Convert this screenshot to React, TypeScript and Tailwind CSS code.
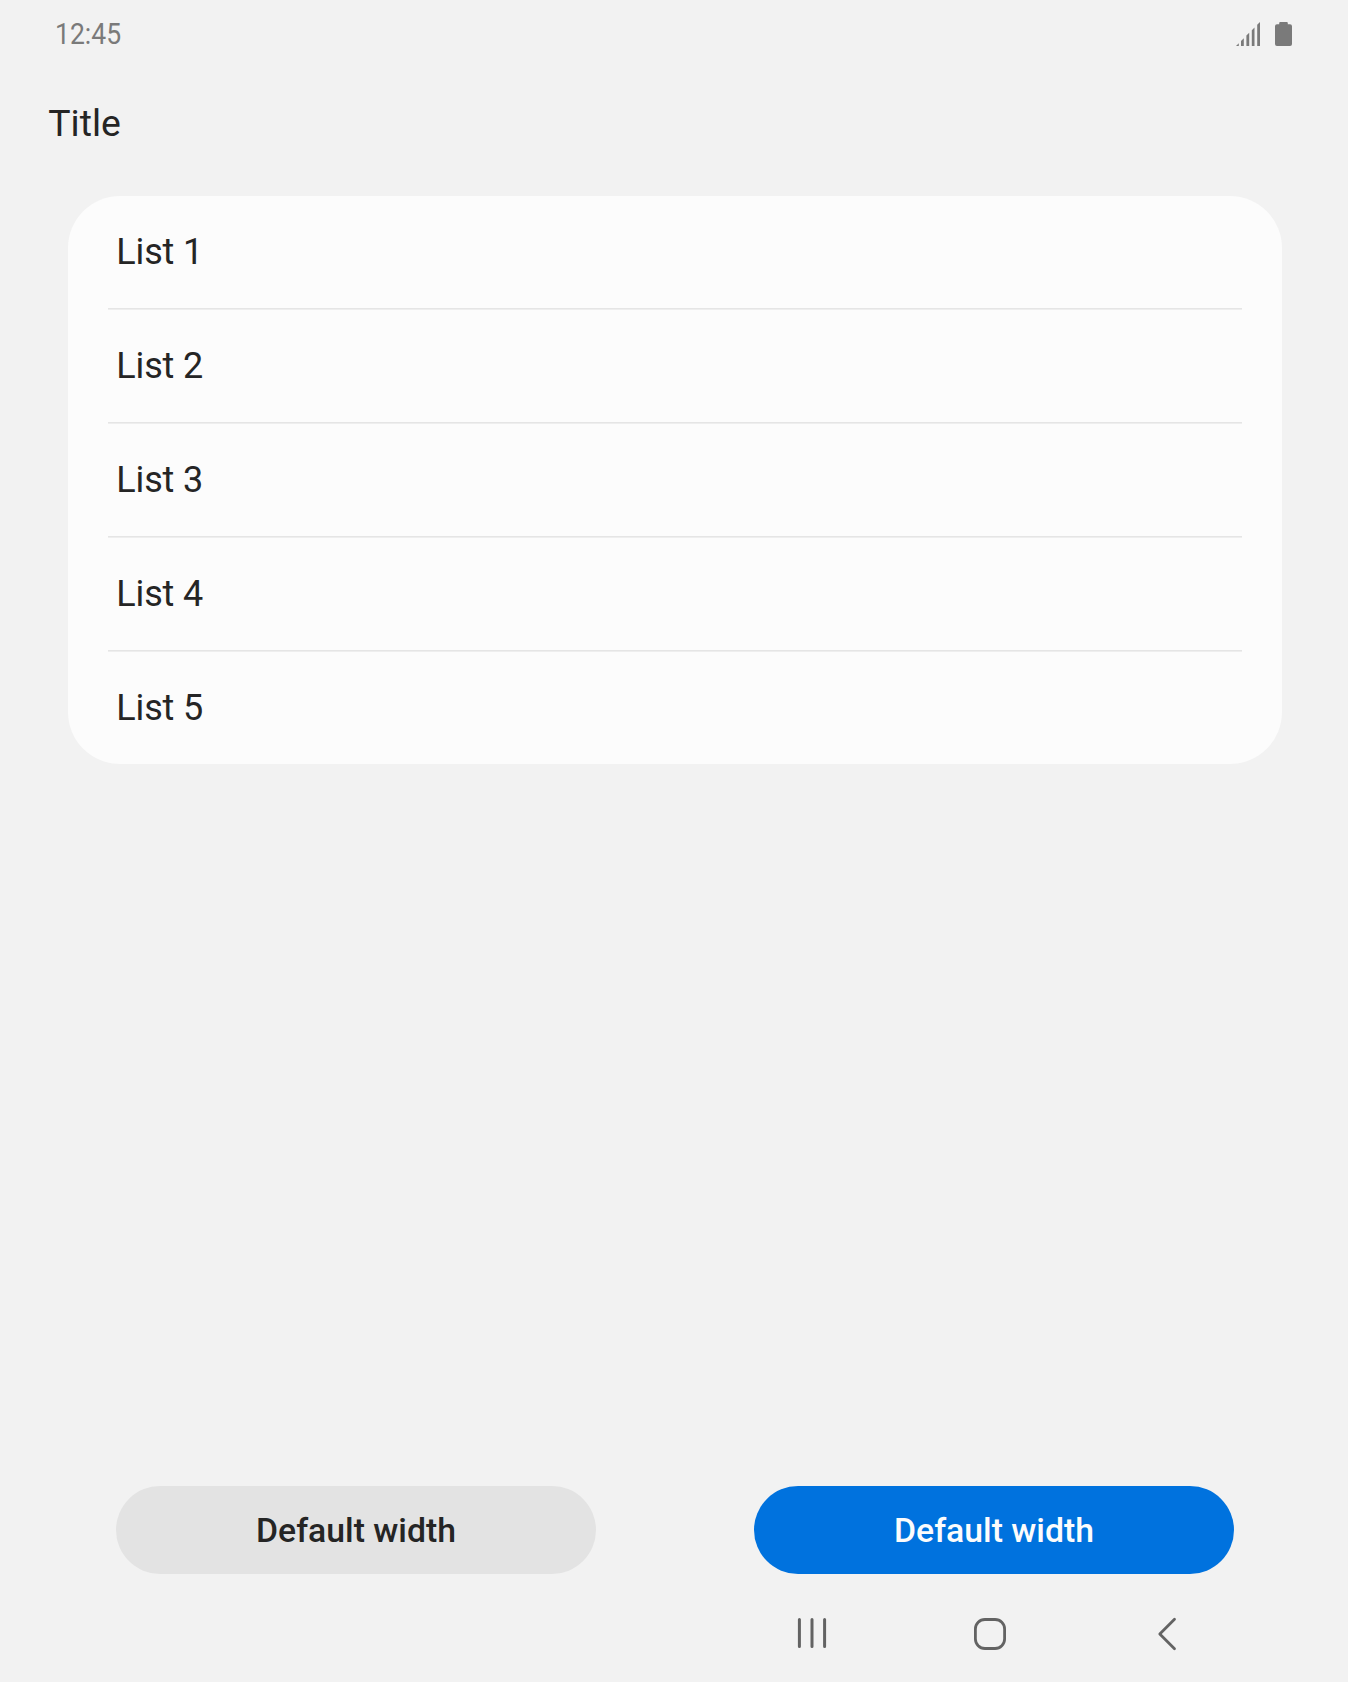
const items = ["List 1", "List 2", "List 3", "List 4", "List 5"];

function SignalIcon() {
  return (
    <svg width="26" height="24" viewBox="0 0 26 24" fill="#7a7a7a">
      <path d="M1 24 3.8 21.2V24ZM6 24V19L8.8 16.2V24ZM11.4 24V13.6L14.2 10.8V24ZM16.8 24V8.2L19.5 5.5V24ZM22.2 24V2.8L25 0V24Z" />
    </svg>
  );
}

function BatteryIcon() {
  return (
    <svg width="17" height="24" viewBox="0 0 17 24" fill="#7a7a7a">
      <path d="M5.2 0h6.6q1 0 1 1v1.2H15q2 0 2 2V22q0 2-2 2H2q-2 0-2-2V4.2q0-2 2-2h2.2V1q0-1 1-1Z" />
    </svg>
  );
}

export default function App() {
  return (
    <div className="flex h-[1682px] w-[1348px] flex-col overflow-hidden bg-[#f2f2f2] font-['Roboto',sans-serif] text-[#252525]">
      <header className="flex h-[68px] items-center justify-between pr-14 pl-[55px]">
        <span className="w-[68px] origin-left scale-x-[0.885] text-[30px] leading-[68px] text-[#7a7a7a]">12:45</span>
        <div className="flex items-center gap-[14px]">
          <SignalIcon />
          <BatteryIcon />
        </div>
      </header>
      <h1 className="h-[128px] pl-[48.3px] text-[37.4px] leading-[110px]">Title</h1>
      <ul className="mr-[66px] ml-[68px] rounded-[52px] bg-[#fcfcfc] px-10">
        {items.map((item) => (
          <li
            key={item}
            className="h-[114px] border-b border-[#eeeeee] pl-[8.3px] text-[36px] leading-[112px] tracking-[-0.15px] shadow-[inset_0_-1px_0_#e5e5e5] last:h-[112px] last:border-b-0 last:shadow-none"
          >
            {item}
          </li>
        ))}
      </ul>
      <div className="mt-auto mr-[114px] ml-[116px] flex justify-between text-[33.75px] leading-[86px] font-medium">
        <button className="h-[88px] w-[480px] rounded-full bg-[#e3e3e3] pt-0.5">Default width</button>
        <button className="h-[88px] w-[480px] rounded-full bg-[#0072de] pt-0.5 text-[#fcfcfc]">Default width</button>
      </div>
      <nav className="flex h-[108px] items-start justify-end pt-[42px] pr-[170px]">
        <svg className="mr-[144px]" width="32" height="36" viewBox="0 0 32 36" fill="none" stroke="#636363" strokeWidth="3" strokeLinecap="round">
          <path d="M3.4 3.5V30.5M16 3.5V30.5M28.6 3.5V30.5" />
        </svg>
        <svg className="mr-[148px]" width="36" height="36" viewBox="0 0 36 36" fill="none" stroke="#636363" strokeWidth="2.8">
          <rect x="3.4" y="3.5" width="29.2" height="29" rx="9.5" />
        </svg>
        <svg width="22" height="36" viewBox="0 0 22 36" fill="none" stroke="#636363" strokeWidth="2.8" strokeLinecap="round" strokeLinejoin="round">
          <path d="M18.5 3.3 3.8 18l14.7 14.7" />
        </svg>
      </nav>
    </div>
  );
}
